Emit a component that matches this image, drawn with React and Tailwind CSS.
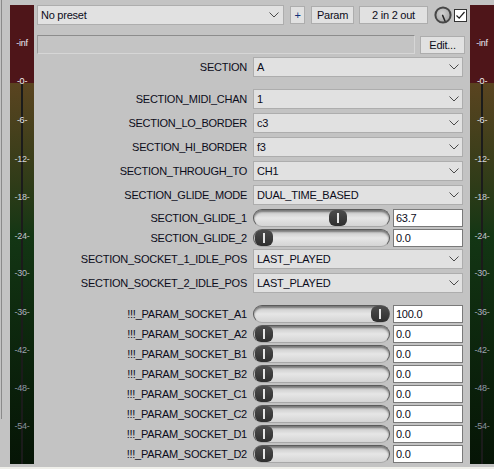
import React from 'react';

const marks = [
  ['-inf', 43, '#ecebf2'],
  ['-0-', 81, '#f2f2f2'],
  ['-6-', 120, '#e2e2e6'],
  ['-12-', 159, '#d4d4da'],
  ['-18-', 197, '#cacbd2'],
  ['-24-', 236, '#c0c3ca'],
  ['-30-', 273, '#b4b9c2'],
  ['-36-', 312, '#aab0ba'],
  ['-42-', 350, '#9ca3ae'],
  ['-48-', 388, '#929aa6'],
  ['-54-', 426, '#8a929e'],
];

const rows = [
  { label: 'SECTION', kind: 'select', value: 'A', mt: 'mt-[3px]' },
  { label: 'SECTION_MIDI_CHAN', kind: 'select', value: '1', mt: 'mt-[12px]' },
  { label: 'SECTION_LO_BORDER', kind: 'select', value: 'c3', mt: 'mt-1' },
  { label: 'SECTION_HI_BORDER', kind: 'select', value: 'f3', mt: 'mt-1' },
  { label: 'SECTION_THROUGH_TO', kind: 'select', value: 'CH1', mt: 'mt-1' },
  { label: 'SECTION_GLIDE_MODE', kind: 'select', value: 'DUAL_TIME_BASED', mt: 'mt-1' },
  { label: 'SECTION_GLIDE_1', kind: 'slider', value: 63.7, text: '63.7', mt: 'mt-1' },
  { label: 'SECTION_GLIDE_2', kind: 'slider', value: 0, text: '0.0', mt: 'mt-0.5' },
  { label: 'SECTION_SOCKET_1_IDLE_POS', kind: 'select', value: 'LAST_PLAYED', mt: 'mt-0.5' },
  { label: 'SECTION_SOCKET_2_IDLE_POS', kind: 'select', value: 'LAST_PLAYED', mt: 'mt-1' },
  { label: '!!!_PARAM_SOCKET_A1', kind: 'slider', value: 100, text: '100.0', mt: 'mt-[12px]' },
  { label: '!!!_PARAM_SOCKET_A2', kind: 'slider', value: 0, text: '0.0', mt: 'mt-0.5' },
  { label: '!!!_PARAM_SOCKET_B1', kind: 'slider', value: 0, text: '0.0', mt: 'mt-0.5' },
  { label: '!!!_PARAM_SOCKET_B2', kind: 'slider', value: 0, text: '0.0', mt: 'mt-0.5' },
  { label: '!!!_PARAM_SOCKET_C1', kind: 'slider', value: 0, text: '0.0', mt: 'mt-0.5' },
  { label: '!!!_PARAM_SOCKET_C2', kind: 'slider', value: 0, text: '0.0', mt: 'mt-0.5' },
  { label: '!!!_PARAM_SOCKET_D1', kind: 'slider', value: 0, text: '0.0', mt: 'mt-0.5' },
  { label: '!!!_PARAM_SOCKET_D2', kind: 'slider', value: 0, text: '0.0', mt: 'mt-0.5' },
];

const Chevron = () => (
  <svg width="10" height="6" viewBox="0 0 10 6" className="shrink-0">
    <path d="M0.5 0.5 L5 5 L9.5 0.5" fill="none" stroke="#4a4a4a" strokeWidth="1" />
  </svg>
);

const Select = ({ value, className }) => (
  <div className={`flex h-[20px] items-center justify-between border border-[#adadad] bg-[#e1e1e1] pl-[3px] pr-[3px] ${className}`}>
    <span>{value}</span>
    <Chevron />
  </div>
);

const Button = ({ children, className }) => (
  <div className={`flex h-[18px] items-center justify-center border border-[#adadad] bg-[#e1e1e1] ${className}`}>
    {children}
  </div>
);

const Slider = ({ value }) => (
  <div className="relative h-[18px] w-[137px] rounded-full border border-[#5a5a5a] border-b-[#a8a8a8] bg-linear-to-b from-[#c4c4c4] via-[#e6e6e6] to-[#d4d4d4] shadow-[inset_0_2px_2px_rgba(0,0,0,0.4)]">
    <div
      className="absolute top-0 bottom-0 w-[18px] rounded-[6px] bg-linear-to-b from-[#4c4c4c] to-[#2f2f2f]"
      style={{ left: 1 + (value / 100) * 116 }}
    >
      <div className="absolute left-[8px] top-[3px] bottom-[3px] w-[2px] bg-[#e6e6e6]" />
    </div>
  </div>
);

const Meter = () => (
  <div className="relative mt-[5px] flex h-[459px] w-[24px] shrink-0 flex-col">
    <div className="h-[78px] bg-[#4e1519]" />
    <div className="h-[152px] bg-linear-to-b from-[#5a4420] to-[#133614]" />
    <div className="flex-1 bg-linear-to-b from-[#133614] to-[#061506]" />
    <div className="absolute left-[11px] top-[78px] bottom-0 w-[2px] bg-[#1b1b1b]" />
    {marks.map(([t, y, c]) => (
      <div
        key={t}
        className="absolute left-0 right-0 text-center text-[9px] leading-[12px]"
        style={{ top: y - 5 - 6, color: c }}
      >
        {t}
      </div>
    ))}
  </div>
);

export default function App() {
  return (
    <div className="flex h-[469px] w-[494px] flex-col overflow-hidden bg-[#c3c3c3] font-['Liberation_Sans',Arial,sans-serif] text-[11px] tracking-[-0.25px] text-[#0c0c1a]">
      <div className="flex h-[467px]">
        <div className="w-[10px] shrink-0">
          <div className="ml-px h-[419px] w-px bg-[#8a8a8a]" />
        </div>
        <Meter />
        <div className="ml-[3px] flex w-[430px] shrink-0 flex-col">
          <div className="mt-[5px] flex h-[20px] items-center">
            <Select value="No preset" className="w-[247px] pr-[4px]" />
            <Button className="ml-[6px] w-[15px] text-[#10307a]">+</Button>
            <Button className="ml-[6px] w-[43px]">Param</Button>
            <Button className="ml-[5px] w-[69px]">2 in 2 out</Button>
            <svg width="18" height="18" viewBox="0 0 18 18" className="ml-[6px] shrink-0">
              <defs>
                <radialGradient id="kn" cx="45%" cy="40%" r="60%">
                  <stop offset="0" stopColor="#d2d2d2" />
                  <stop offset="1" stopColor="#a6a6a6" />
                </radialGradient>
              </defs>
              <circle cx="9" cy="9" r="7.6" fill="url(#kn)" stroke="#474747" strokeWidth="2" />
              <line x1="8.6" y1="9.4" x2="11" y2="15" stroke="#262626" strokeWidth="1.5" strokeLinecap="round" />
            </svg>
            <div className="ml-[2px] flex h-[13px] w-[13px] items-center justify-center border border-[#333] bg-white">
              <svg width="11" height="11" viewBox="0 0 11 11">
                <path d="M1.5 5.5 L4.2 8.2 L9.5 2" fill="none" stroke="#1e1e1e" strokeWidth="1.2" />
              </svg>
            </div>
          </div>
          <div className="mt-[10px] flex h-[19px] items-center">
            <div className="h-[19px] w-[378px] border border-t-[#8c8c8c] border-l-[#9a9a9a] border-b-[#d6d6d6] border-r-[#d6d6d6] bg-[#c4c4c4]" />
            <Button className="ml-[5px] mt-px w-[45px]">Edit...</Button>
          </div>
          {rows.map((r) => (
            <div key={r.label} className={`flex items-center ${r.mt}`}>
              <div className="w-[210px] text-right whitespace-nowrap">{r.label}</div>
              {r.kind === 'select' ? (
                <Select value={r.value} className="ml-[6px] w-[210px]" />
              ) : (
                <div className="ml-[6px] flex h-[18px] w-[210px] items-center">
                  <Slider value={r.value} />
                  <div className="ml-[3px] flex h-[18px] w-[70px] items-center border border-[#7a7a7a] bg-white pl-[2px]">
                    {r.text}
                  </div>
                </div>
              )}
            </div>
          ))}
        </div>
        <div className="ml-[3px]">
          <Meter />
        </div>
      </div>
      <div className="h-[2px] bg-[#efefea]" />
    </div>
  );
}
